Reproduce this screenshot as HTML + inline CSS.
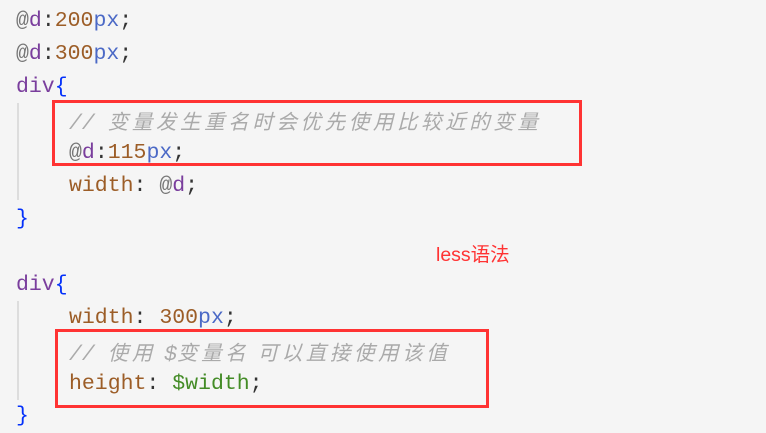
<html><head><style>
body{margin:0;width:766px;height:431px;background:#f5f5f5;position:relative;overflow:hidden;font-family:"Liberation Mono","Noto Sans CJK SC",monospace;font-size:21.5px}
.l{position:absolute;left:16px;height:33px;line-height:33px;white-space:pre}
.i{left:69px}
.at{color:#777}.v{color:#7a3e9d}.n{color:#9c5d27}.u{color:#4b69c6}.p{color:#333}.b{color:#0431fa}.k{color:#9c5d27}.g{color:#448c27}
.c{color:#aaa;font-style:italic}.c span{letter-spacing:3.6px;font-family:"Noto Sans CJK SC",sans-serif;font-size:20.5px;font-style:italic}
.box{position:absolute;border:3px solid #f33;box-sizing:border-box}
.guide{position:absolute;left:17px;width:2px;background:#ddd}
</style></head><body>
<div class="l" style="top:5px"><span class="at">@</span><span class="v">d</span><span class="p">:</span><span class="n">200</span><span class="u">px</span><span class="p">;</span></div>
<div class="l" style="top:38px"><span class="at">@</span><span class="v">d</span><span class="p">:</span><span class="n">300</span><span class="u">px</span><span class="p">;</span></div>
<div class="l" style="top:71px"><span class="v">div</span><span class="b">{</span></div>
<div class="guide" style="top:103px;height:97px"></div>
<div class="l i c" style="top:104px">// <span>变量发生重名时会优先使用比较近的变量</span></div>
<div class="l i" style="top:137px"><span class="at">@</span><span class="v">d</span><span class="p">:</span><span class="n">115</span><span class="u">px</span><span class="p">;</span></div>
<div class="l i" style="top:170px"><span class="k">width</span><span class="p">: </span><span class="at">@</span><span class="v">d</span><span class="p">;</span></div>
<div class="l" style="top:203px"><span class="b">}</span></div>
<div class="l" style="top:269px"><span class="v">div</span><span class="b">{</span></div>
<div class="guide" style="top:301px;height:99px"></div>
<div class="l i" style="top:302px"><span class="k">width</span><span class="p">: </span><span class="n">300</span><span class="u">px</span><span class="p">;</span></div>
<div class="l i c" style="top:335px">// <span>使用 </span>$<span>变量名 可以直接使用该值</span></div>
<div class="l i" style="top:368px"><span class="k">height</span><span class="p">: </span><span class="g">$width</span><span class="p">;</span></div>
<div class="l" style="top:400px"><span class="b">}</span></div>
<div class="box" style="left:52px;top:100px;width:530px;height:66px"></div>
<div class="box" style="left:55px;top:329px;width:434px;height:79px"></div>
<div style="position:absolute;left:436px;top:241px;color:#f33;font-family:'Liberation Sans','Noto Sans CJK SC',sans-serif;font-size:19.5px;line-height:28px">less语法</div>
</body></html>
